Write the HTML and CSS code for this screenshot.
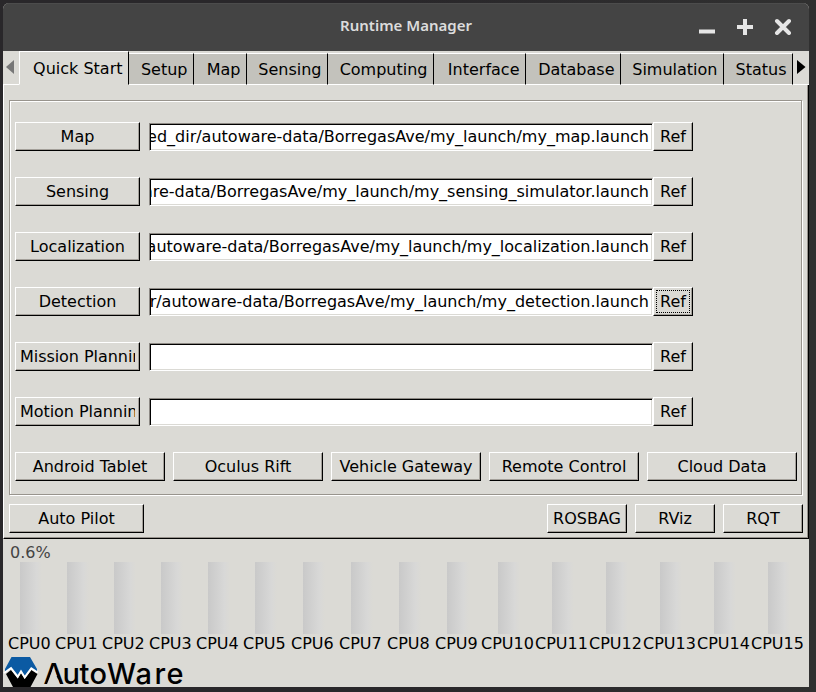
FILE: index.html
```html
<!DOCTYPE html>
<html lang="en">
<head>
<meta charset="utf-8">
<title>Runtime Manager</title>
<link rel="stylesheet" href="styles.css">
</head>
<body>
<div class="window">
  <header class="titlebar">
    <h1>Runtime Manager</h1>
    <svg class="controls" width="94" height="18" viewBox="0 0 94 18">
      <path d="M0 14.500h16M38 10h16M46 2v16" stroke-width="4"/>
      <path d="M78 4l12 12M90 4l-12 12" stroke-width="4" stroke-linecap="round"/>
    </svg>
  </header>
  <nav class="tabs">
    <span class="arrow"><svg width="9" height="14" viewBox="0 0 9 14"><path d="M0 7l8-7v14z" fill="#777"/></svg></span>
    <span class="tab active">Quick Start</span>
    <span class="tab w-setup">Setup</span>
    <span class="tab w-map">Map</span>
    <span class="tab w-sensing">Sensing</span>
    <span class="tab w-computing">Computing</span>
    <span class="tab w-interface">Interface</span>
    <span class="tab w-database">Database</span>
    <span class="tab w-simulation">Simulation</span>
    <span class="tab w-status">Status</span>
    <span class="arrow next"><svg width="9" height="14" viewBox="0 0 9 14"><path d="M8.500 7L0 0v14z" fill="#000"/></svg></span>
  </nav>
  <main class="page">
    <section class="group">
      <div class="row"><span class="btn name">Map</span><span class="field"><span>ed_dir/autoware-data/BorregasAve/my_launch/my_map.launch</span></span><span class="btn ref">Ref</span></div>
      <div class="row"><span class="btn name">Sensing</span><span class="field"><span>are-data/BorregasAve/my_launch/my_sensing_simulator.launch</span></span><span class="btn ref">Ref</span></div>
      <div class="row"><span class="btn name">Localization</span><span class="field"><span>autoware-data/BorregasAve/my_launch/my_localization.launch</span></span><span class="btn ref">Ref</span></div>
      <div class="row"><span class="btn name">Detection</span><span class="field"><span>r/autoware-data/BorregasAve/my_launch/my_detection.launch</span></span><span class="btn ref focus">Ref</span></div>
      <div class="row"><span class="btn name long"><span>Mission Planning</span></span><span class="field"></span><span class="btn ref">Ref</span></div>
      <div class="row"><span class="btn name long"><span>Motion Planning</span></span><span class="field"></span><span class="btn ref">Ref</span></div>
      <div class="tools">
        <span class="btn">Android Tablet</span><span class="btn">Oculus Rift</span><span class="btn">Vehicle Gateway</span><span class="btn">Remote Control</span><span class="btn">Cloud Data</span>
      </div>
    </section>
    <div class="actions">
      <span class="btn pilot">Auto Pilot</span>
      <span class="btn small">ROSBAG</span><span class="btn small">RViz</span><span class="btn small">RQT</span>
    </div>
  </main>
  <footer class="status">
    <div class="load">0.6%</div>
    <div class="cpus">
      <div class="cpu"><i></i>CPU0</div><div class="cpu"><i></i>CPU1</div><div class="cpu"><i></i>CPU2</div><div class="cpu"><i></i>CPU3</div><div class="cpu"><i></i>CPU4</div><div class="cpu mid"><i></i>CPU5</div><div class="cpu mid"><i></i>CPU6</div><div class="cpu mid"><i></i>CPU7</div><div class="cpu mid"><i></i>CPU8</div><div class="cpu last"><i></i>CPU9</div><div class="cpu wide"><i></i>CPU10</div><div class="cpu wide"><i></i>CPU11</div><div class="cpu wide"><i></i>CPU12</div><div class="cpu wide"><i></i>CPU13</div><div class="cpu wide"><i></i>CPU14</div><div class="cpu wide"><i></i>CPU15</div>
    </div>
    <svg class="logo" width="190" height="30" viewBox="0 0 190 30">
      <path d="M8.500 0H27L34 12V15L28.300 11 21.700 20 18 14 14.700 19.500 8 11 2 15.500V12z" fill="#0b5aa3"/>
      <path d="M3 17L8 13 14.700 21.500 18 16 21.700 22 28.300 13 34.500 17 27.500 30H10z" fill="#000"/>
      <path d="M1 16L8 11l6.700 8.700L18 14.300l3.700 6L28.300 11.300l6.400 4.200" fill="none" stroke="#fff" stroke-width="2"/>
      <text x="40.500 59.500 76.500 86.500 104 132.500 151.500 163.500" y="27">AutoWare</text>
      <path class="counter" d="M50.400 10.500L57 27.700H43.800z"/>
    </svg>
  </footer>
</div>
</body>
</html>
```
FILE: styles.css
```css
* { box-sizing: border-box; }
body {
  margin: 0;
  width: 816px;
  height: 692px;
  padding: 3px 7px 5px 3px;
  background: linear-gradient(90deg, #29272a 0 50%, #303030);
  font: 16px/20px "DejaVu Sans", sans-serif;
  color: #000;
  overflow: hidden;
}
.window {
  width: 806px;
  height: 684px;
  background: #dbdad5;
  border-radius: 6px 6px 0 0;
  overflow: hidden;
}
.titlebar {
  height: 48px;
  background: #444;
  border-top: 1px solid #4c4c4c;
  display: grid;
  grid-template-columns: 1fr auto;
  padding: 0 16px 0 110px;
}
h1 {
  margin: 0;
  padding-top: 11px;
  text-align: center;
  font: 600 15px/20px "Noto Sans", sans-serif;
  letter-spacing: 0;
  color: #dcdcdc;
}
.controls { margin-top: 13px; fill: none; stroke: #e6e6e6; }
.tabs { display: flex; align-items: flex-end; height: 34px; }
.arrow { width: 16px; height: 34px; padding: 9px 0 0 3px; border-bottom: 1px solid #fff; }
.arrow svg { display: block; }
.next { width: 16px; padding-left: 4px; }
.tab {
  height: 32px;
  padding: 6px 5.500px 0 0;
  text-align: right;
  white-space: nowrap;
  background: #c3c2bc;
  border-top: 1px solid #fff;
  border-right: 1px solid #000;
  border-bottom: 1px solid #fff;
}
.active {
  width: 110px;
  height: 34px;
  padding-top: 7px;
  background: #dbdad5;
  border-left: 1px solid #fff;
  border-bottom-color: #dbdad5;
}
.w-setup { width: 65px; }
.w-map { width: 53px; }
.w-sensing { width: 81px; }
.w-computing { width: 106px; }
.w-interface { width: 92px; }
.w-database { width: 95px; }
.w-simulation { width: 103px; }
.w-status { width: 69px; }
.page {
  width: 806px;
  height: 454px;
  padding: 15px 5px 0;
  border-left: 1px solid #fff;
  border-right: 1px solid #000;
  border-bottom: 1px solid #000;
  box-shadow: inset -1px -1px #96918b;
}
.group {
  width: 793px;
  height: 395px;
  padding: 21px 4px 0;
  border: 1px solid #98948d;
  box-shadow: inset 1px 1px #fff, 1px 1px #fff;
}
.row { display: flex; align-items: center; height: 29px; margin-bottom: 26px; padding-left: 1px; }
.btn {
  display: block;
  height: 29px;
  padding-top: 4px;
  text-align: center;
  white-space: nowrap;
  border: 1px solid #fff;
  border-right-color: #000;
  border-bottom-color: #000;
  box-shadow: inset -1px -1px #a39f99;
}
.name { width: 125px; margin-right: 9px; }
.long { padding-left: 4px; padding-right: 4px; text-align: left; }
.long span { display: block; overflow: hidden; letter-spacing: -.05px; }
.field {
  display: flex;
  justify-content: flex-end;
  width: 504px;
  height: 28px;
  padding: 3px 3px 0 1px;
  overflow: hidden;
  white-space: nowrap;
  background: #fff;
  border: 1px solid #fff;
  border-top-color: #8d8984;
  border-left-color: #8d8984;
  box-shadow: inset 1px 1px #000, inset -1px -1px #dbdad5;
}
.ref { width: 40px; }
.focus { outline: 1px dotted #000; outline-offset: -4px; }
.tools { display: flex; gap: 8px; padding-left: 1px; }
.tools .btn { width: 150px; }
.actions { display: flex; gap: 8px; width: 794px; padding-top: 9px; }
.pilot { width: 135px; margin-right: auto; }
.small { width: 80px; }
.status { height: 148px; padding-top: 4px; }
.load { height: 19px; padding-left: 7px; color: #444; }
.cpus { display: flex; padding-left: 5px; height: 95px; }
.cpu { width: 47px; white-space: nowrap; }
.cpu i {
  display: block;
  width: 22px;
  height: 72px;
  margin-left: 12px;
  background: linear-gradient(90deg, #c9c9c9, #d8d8d7 75%, #dbdad5);
}
.mid { width: 48px; }
.last { width: 46px; }
.wide { width: 54px; }
.wide i { margin-left: 17px; }
.logo { display: block; }
.logo text { font: 500 29px Inter, sans-serif; }
.counter { fill: #dbdad5; }
```
